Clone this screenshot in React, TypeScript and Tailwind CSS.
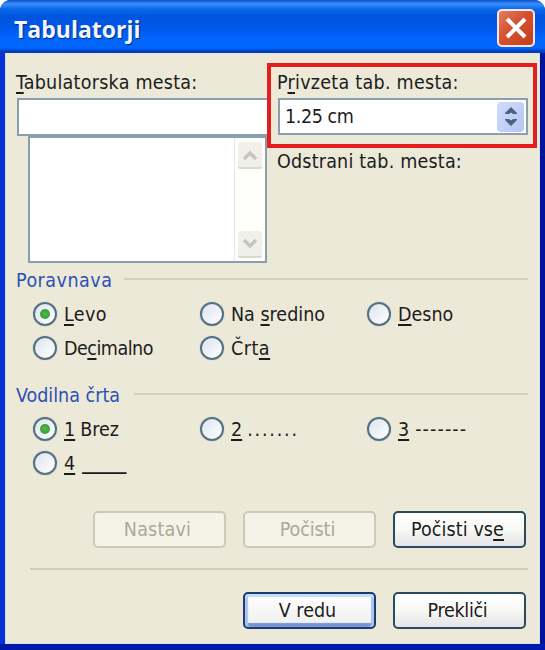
import React from 'react';
import clsx from 'clsx';

interface LabelProps {
	text: string;
	hotkey?: number;
	className?: string;
}

// Text with one underlined access key
const Label = ({ text, hotkey = -1, className }: LabelProps) => {
	if (hotkey < 0) {
		return <span className={clsx('whitespace-pre', className)}>{text}</span>;
	}
	return (
		<span className={clsx('whitespace-pre', className)}>
			{text.slice(0, hotkey)}
			<span className="underline decoration-2 underline-offset-[3px] [text-decoration-skip-ink:none]">
				{text[hotkey]}
			</span>
			{text.slice(hotkey + 1)}
		</span>
	);
};

interface RadioProps extends LabelProps {
	checked?: boolean;
	// leader sample drawn after the label
	leader?: string;
	leaderClassName?: string;
}

const Radio = ({ checked, leader, leaderClassName, ...label }: RadioProps) => (
	<div className="flex h-[34px] items-center">
		<div className="flex size-6 shrink-0 items-center justify-center rounded-full border-2 border-[#547184] bg-linear-to-br from-[#dde4ee] to-white shadow-[0_0_1px_#8799a3]">
			{checked && (
				<div className="size-2.5 rounded-full bg-radial from-[#55ba50] to-[#269526]" />
			)}
		</div>
		<Label {...label} className={clsx('mt-[2px] ml-[7px]', label.className)} />
		{leader && <span className={leaderClassName}>{leader}</span>}
	</div>
);

const GroupTitle = ({ text, className }: LabelProps) => (
	<div className="flex h-6 items-center">
		<Label text={text} className={clsx('mt-[3px] text-[#2b50b4]', className)} />
		<div className="mt-[-1px] ml-auto h-[2px] flex-1 bg-[#d3d0bf]" />
	</div>
);

interface ButtonProps extends LabelProps {
	variant?: 'normal' | 'primary' | 'disabled';
}

const Button = ({ variant = 'normal', ...label }: ButtonProps) => (
	<button
		className={clsx(
			'flex h-[37px] w-[133px] items-center justify-center rounded-[5px] border-2 pr-[4px]',
			variant === 'normal' &&
				'border-[#294a61] bg-linear-to-b from-white via-[#f8f8f4] to-[#e4e3e8]',
			variant === 'primary' &&
				'border-[#1d3c70] bg-linear-to-b from-white to-[#eeeef0] shadow-[inset_0_3px_1px_#c5dcf8,inset_3px_0_1px_#a9c4ee,inset_-3px_0_1px_#a9c4ee,inset_0_-4px_1px_#7594d0]',
			variant === 'disabled' && 'border-[#ccc9b9] bg-[#f5f3e8] text-[#aaa898]'
		)}
	>
		<Label {...label} />
	</button>
);

const ScrollArrow = ({ d }: { d: string }) => (
	<div className="flex h-7 w-[26px] items-center justify-center rounded-sm border border-b-2 border-white border-b-[#d9d9d2] bg-[#f0efe9]">
		<svg className="h-3 w-4" viewBox="0 0 16 12" fill="none">
			<path d={d} stroke="#c5c6bd" strokeWidth="3.5" />
		</svg>
	</div>
);

const App = () => {
	return (
		<div className="h-[650px] w-[545px] overflow-hidden bg-white font-['DejaVu_Sans_Condensed','DejaVu_Sans',sans-serif] text-[19.5px] leading-6 text-[#1c1c1c] [font-stretch:condensed]">
			<div className="flex h-full flex-col rounded-t-[11px] bg-[#0018ac]">
				<header className="flex h-[53px] shrink-0 items-center justify-between rounded-t-[11px] bg-[linear-gradient(180deg,#0a50cf_0,#3a91fa_4px,#0869ec_9px,#0054df_17px,#0058ea_28px,#0066ff_39px,#0065fc_48px,#0040c5_51px,#003bb5_53px)] pr-[10px] pl-[14px]">
					<h1 className="pt-1 font-['Open_Sans',sans-serif] text-[23px] font-bold text-[#f2f6ff] [font-stretch:normal] [text-shadow:1px_1px_1px_#082a80]">
						Tabulatorji
					</h1>
					<button
						aria-label="Zapri"
						className="mt-[3px] flex size-[38px] items-center justify-center rounded-[5px] border-2 border-[#f3e6ef] bg-[linear-gradient(135deg,#e07f62,#d4502f_45%,#c4401c)]"
					>
						<svg className="size-[22px]" viewBox="0 0 22 22">
							<path d="M2 2 20 20M20 2 2 20" stroke="#fff" strokeWidth="4" />
						</svg>
					</button>
				</header>

				<div className="mb-[6px] flex flex-1 bg-linear-to-r from-[#0733d6] from-50% to-[#00139b] to-50% pr-[5px] pl-[5px]">
					<main className="flex-1 border border-t-0 border-[#cfe0f2] bg-[#ece9d8] pr-[11px]">
						<section className="flex h-[214px]">
							<div className="ml-[11px] w-[250px] pt-[18px]">
								<Label
									text="Tabulatorska mesta:"
									hotkey={0}
									className="-ml-px block tracking-[0.25px]"
								/>
								<div className="mt-[3px] h-[38px] border-2 border-r-0 border-[#899fae] bg-white" />
								<div className="ml-[11px] flex h-[127px] justify-end border-2 border-[#899fae] bg-white">
									<div className="flex w-[31px] flex-col items-center justify-between border-l border-[#e6e6e2] bg-[#fefefb] py-[3px]">
										<ScrollArrow d="M2 10 8 4 14 10" />
										<ScrollArrow d="M2 2 8 8 14 2" />
									</div>
								</div>
							</div>
							<div className="-mr-[10px] w-[270px] shrink-0 pt-[10px]">
								<div className="h-[85px] border-4 border-[#e41d1d] pt-1 pl-[7px]">
									<Label
										text="Privzeta tab. mesta:"
										hotkey={1}
										className="-ml-px block tracking-[0.27px]"
									/>
									<div className="mt-[3px] flex h-[37px] w-[250px] items-center border-2 border-[#899fae] bg-white pr-[2px] pl-[5px]">
										<Label
											text="1.25 cm"
											className="mt-px flex-1 tracking-[-0.4px]"
										/>
										<div className="flex h-[30px] w-[27px] flex-col items-center justify-center gap-[5px] rounded-sm bg-linear-to-br from-[#cfdcfc] to-[#b4c6f2]">
											<svg className="h-[7px] w-3" viewBox="0 0 12 7">
												<path d="M6 0 12 6V7H8L6 5.500 4 7H0V6Z" fill="#4d6185" />
											</svg>
											<svg className="h-[7px] w-3" viewBox="0 0 12 7">
												<path d="M6 7 12 1V0H8L6 1.500 4 0H0V1Z" fill="#4d6185" />
											</svg>
										</div>
									</div>
								</div>
								<Label
									text="Odstrani tab. mesta:"
									className="mt-[2px] ml-[10px] block tracking-[0.2px]"
								/>
							</div>
						</section>

						<section className="ml-[10px]">
							<GroupTitle text="Poravnava" className="mr-3 tracking-[0.5px]" />
							<div className="mt-[6px] ml-[17px] grid grid-cols-[167px_167px_150px]">
								<Radio text="Levo" hotkey={0} checked className="tracking-[0.4px]" />
								<Radio text="Na sredino" hotkey={3} />
								<Radio text="Desno" hotkey={0} />
								<Radio text="Decimalno" hotkey={2} className="tracking-[-0.5px]" />
								<Radio text="Črta" hotkey={3} className="tracking-[0.5px]" />
							</div>
						</section>

						<section className="mt-[17px] ml-[10px]">
							<GroupTitle text="Vodilna črta" className="mr-[14px]" />
							<div className="mt-[6px] ml-[17px] grid grid-cols-[167px_167px_150px]">
								<Radio
									text="1"
									hotkey={0}
									checked
									leader="Brez"
									leaderClassName="mt-[2px] ml-[5px]"
								/>
								<Radio
									text="2"
									hotkey={0}
									leader="......."
									leaderClassName="mt-[2px] ml-[5px] tracking-[1.8px]"
								/>
								<Radio
									text="3"
									hotkey={0}
									leader="-------"
									leaderClassName="mt-[2px] ml-[6px] tracking-[1.1px]"
								/>
								<Radio
									text="4"
									hotkey={0}
									leader="____"
									leaderClassName="-mt-[6px] ml-[7px] text-[24.5px]"
								/>
							</div>
						</section>

						<footer className="mt-[31px] mr-[2px] flex flex-col items-end">
							<div className="flex gap-[17px]">
								<Button text="Nastavi" variant="disabled" className="tracking-[0.2px]" />
								<Button text="Počisti" variant="disabled" className="tracking-[-0.1px]" />
								<Button text="Počisti vse" hotkey={10} className="tracking-[0.1px]" />
							</div>
							<div className="mt-[20px] -mr-[2px] h-[2px] w-[498px] bg-[#d0cebc]" />
							<div className="mt-[22px] flex gap-[17px]">
								<Button text="V redu" variant="primary" />
								<Button text="Prekliči" className="tracking-[-0.3px]" />
							</div>
						</footer>
					</main>
				</div>
			</div>
		</div>
	);
};

export default App;
